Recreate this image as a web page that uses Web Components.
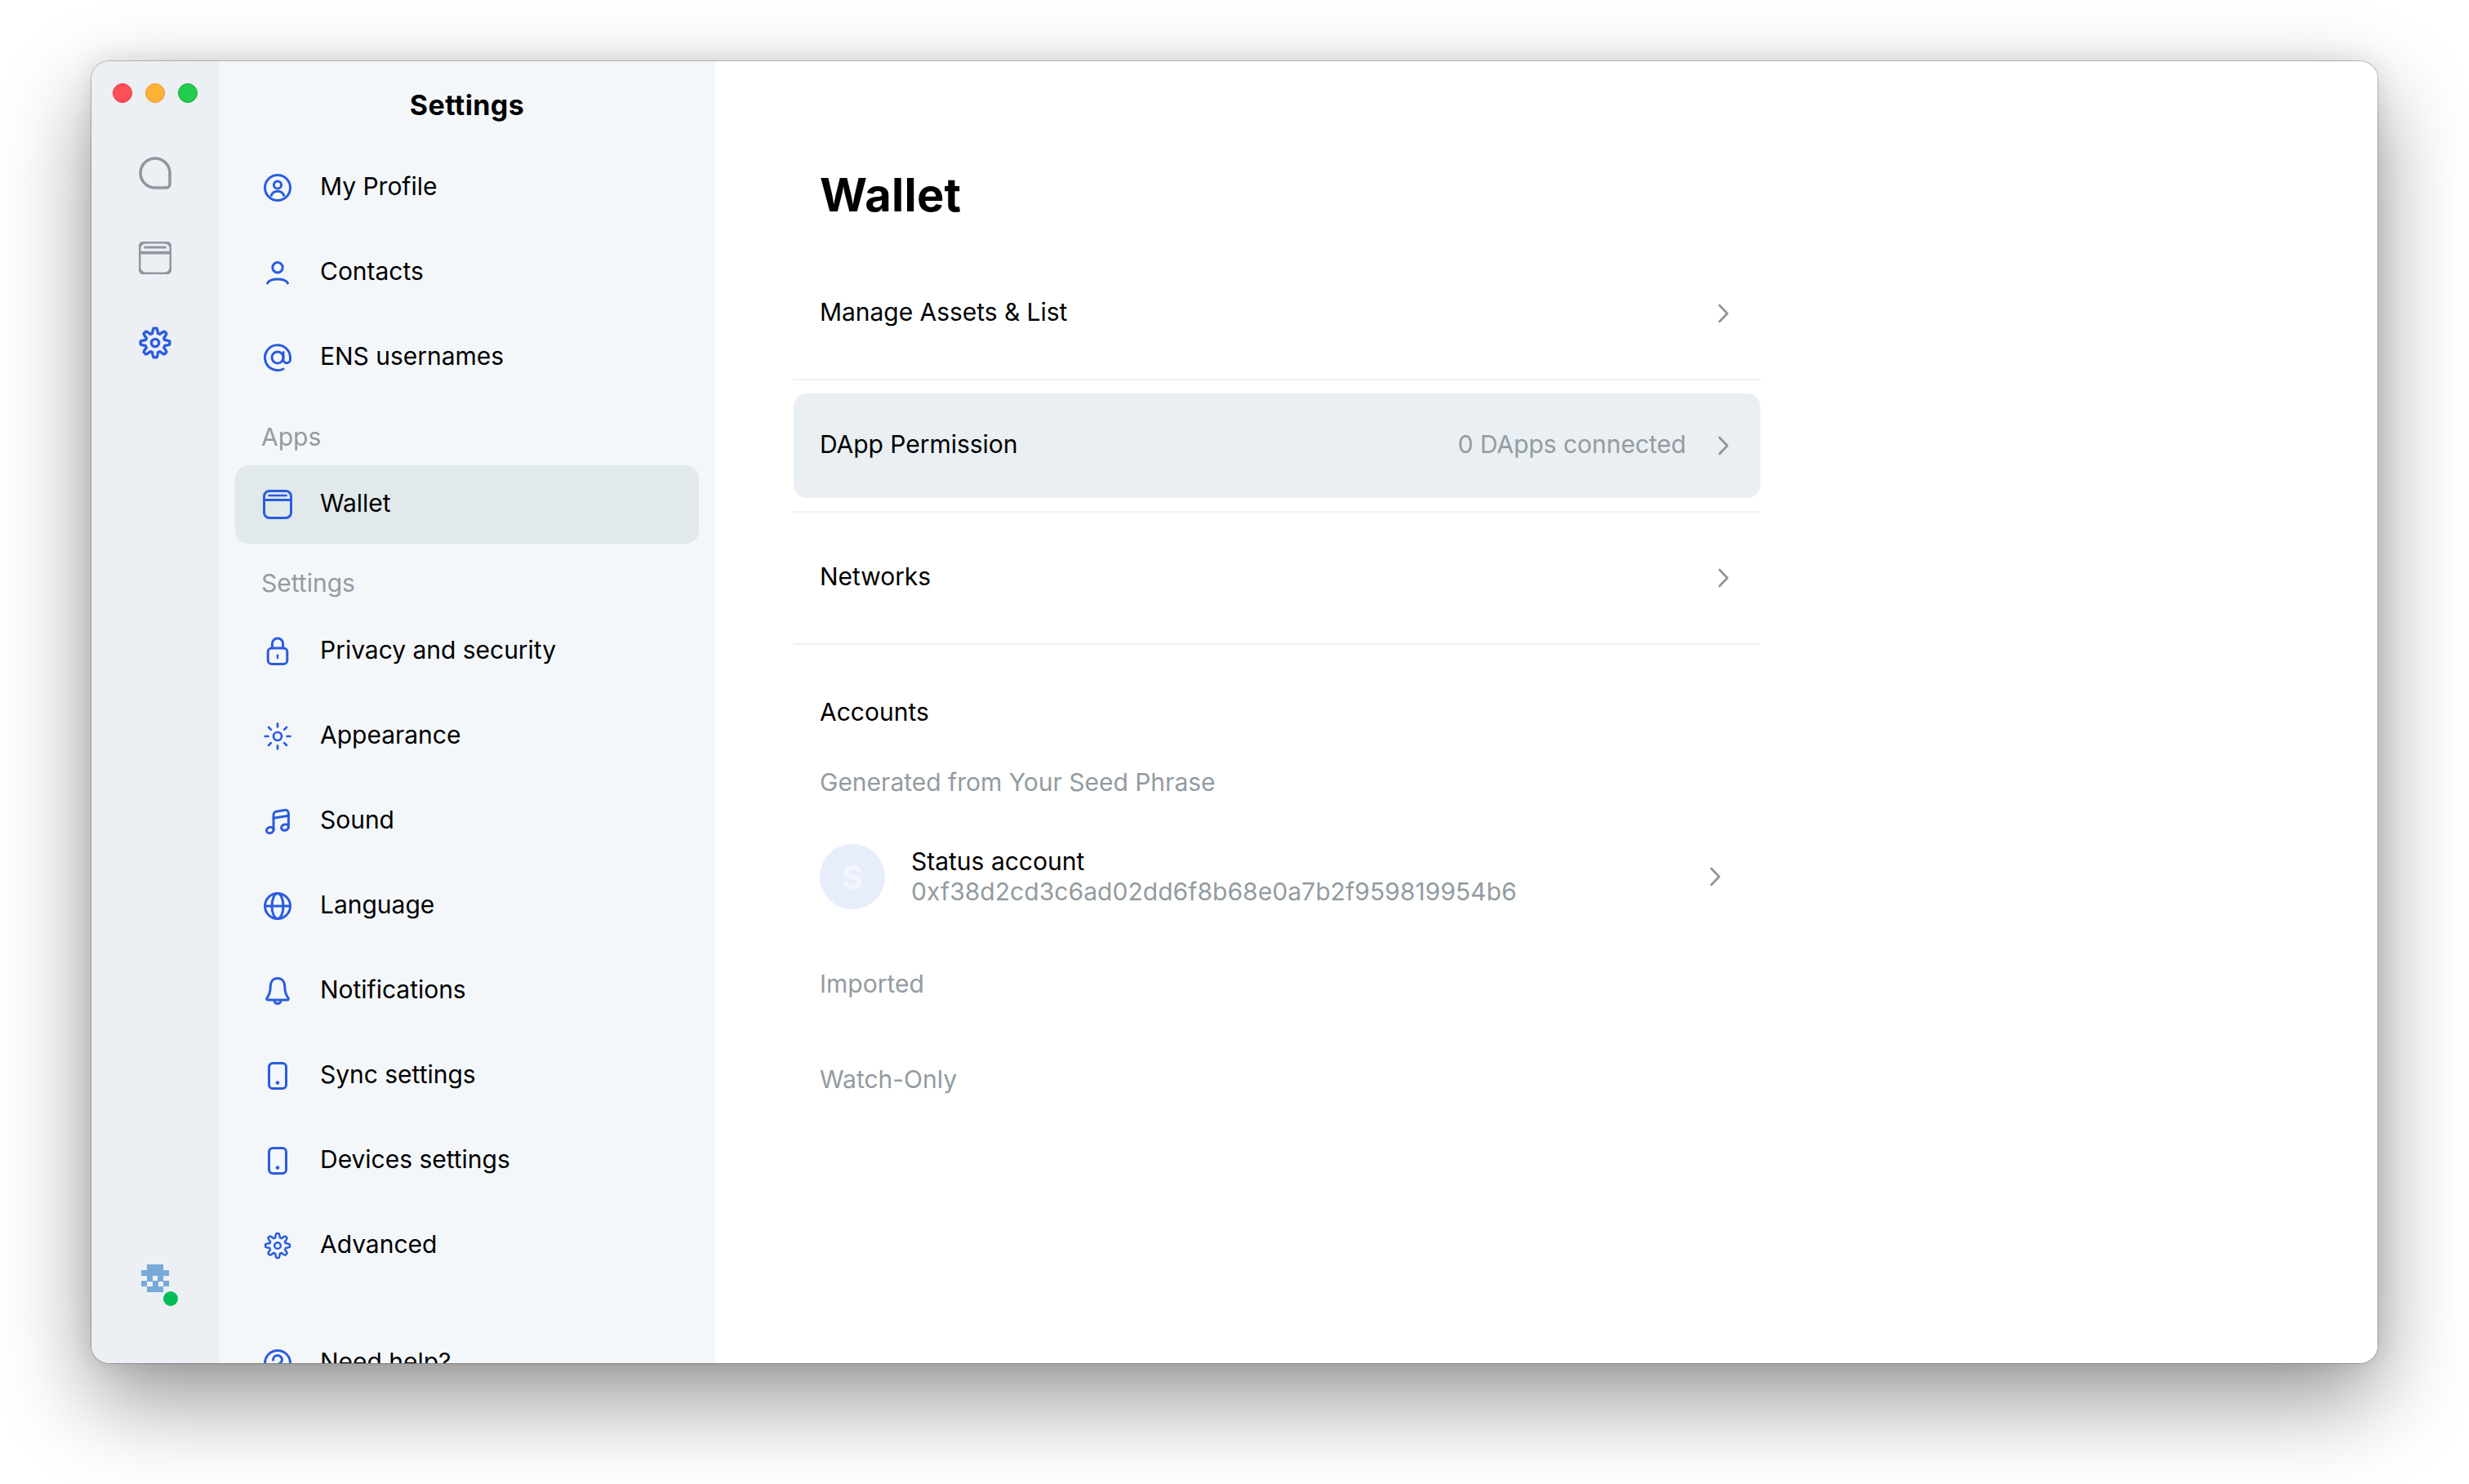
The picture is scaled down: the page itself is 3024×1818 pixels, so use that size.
<!DOCTYPE html>
<html>
<head>
<meta charset="utf-8">
<title>Settings</title>
<style>
  html, body { margin: 0; height: 100%; background: #fff; overflow: hidden; }
  body { padding: 75px 0 0 112px; box-sizing: border-box; font-family: Inter, "Liberation Sans", sans-serif; }
</style>
</head>
<body>
<app-window>
  <nav-rail slot="rail"></nav-rail>
  <settings-sidebar slot="sidebar"></settings-sidebar>
  <wallet-page slot="main"></wallet-page>
</app-window>

<script>
(() => {
  // wavy outline for the cog, sampled so the teeth stay round
  const gearPath = () => {
    let d = '';
    for (let i = 0; i < 240; i++) {
      const a = (i / 240) * Math.PI * 2;
      const r = 15 + 2.9 * Math.max(-1, Math.min(1, 1.5 * Math.cos(8 * a)));
      d += (i ? 'L' : 'M') + (20 + r * Math.sin(a)).toFixed(2) + ' ' + (20 - r * Math.cos(a)).toFixed(2);
    }
    return d + 'Z';
  };

  const sunRays = () => {
    let d = '';
    for (let i = 0; i < 8; i++) {
      const a = i * Math.PI / 4;
      const s = Math.sin(a), c = Math.cos(a);
      d += `M${(20 + 11.5 * s).toFixed(2)} ${(20 - 11.5 * c).toFixed(2)}L${(20 + 15.5 * s).toFixed(2)} ${(20 - 15.5 * c).toFixed(2)}`;
    }
    return d;
  };

  const ICONS = {
    chat: { box: '0 0 40 40', body: '<path d="M20 2A18 18 0 0 1 38 20V33.5A4.5 4.5 0 0 1 33.5 38H20A18 18 0 0 1 20 2Z"/>' },
    wallet: { box: '0 0 40 40', body: `<rect x="3.5" y="3.5" width="33" height="33" rx="6.5"/><path d="M3.5 14.5H36.5"/><path d="M9.5 9H30.5" stroke-width="2.6"/>` },
    profile: { box: '0 0 40 40', body: '<circle cx="20" cy="20" r="15.5"/><circle cx="20" cy="16.5" r="4.6"/><path d="M12.3 29.4C15 22.6 25 22.6 27.7 29.4"/>' },
    contact: { box: '0 0 40 40', body: '<circle cx="20" cy="13.7" r="6.2"/><path d="M7.5 33C11 26.3 29 26.3 32.5 33"/>' },
    at: { box: '0 0 40 40', body: '<circle cx="20" cy="20" r="7"/><path d="M27 13.5V22.5A4.2 4.2 0 0 0 35.5 22.5V20A15.5 15.5 0 1 0 27 34"/>' },
    gear: { box: '0 0 40 40', body: `<path d="${gearPath()}"/><circle cx="20" cy="20" r="4.6"/>` },
    gearSmall: { box: '-4 -4 48 48', body: `<path d="${gearPath()}"/><circle cx="20" cy="20" r="4.6"/>` },
    lock: { box: '0 0 40 40', body: '<rect x="8.2" y="16" width="23.6" height="19.5" rx="4.5"/><path d="M13.4 16V10.5A6.6 6.6 0 0 1 26.6 10.5V16"/><path d="M20 25.5V28.5" stroke-width="2.2"/><circle cx="20" cy="25" r="1.4" fill="currentColor" stroke="none"/>' },
    sun: { box: '0 0 40 40', body: `<circle cx="20" cy="20" r="5"/><path d="${sunRays()}"/>` },
    music: { box: '0 0 40 40', body: '<g transform="translate(0 -1)"><ellipse cx="10.8" cy="32" rx="4.4" ry="3.6" transform="rotate(-18 10.8 32)"/><ellipse cx="29" cy="28.6" rx="4.4" ry="3.6" transform="rotate(-18 29 28.6)"/><path d="M15 31.5V13.5A4.5 4.5 0 0 1 19 9L28.6 7.4A4 4 0 0 1 33.4 11.3V28"/><path d="M15 17.2L33.4 14.2"/></g>' },
    globe: { box: '0 0 40 40', body: '<circle cx="20" cy="20" r="15.5"/><ellipse cx="20" cy="20" rx="7" ry="15.5"/><path d="M4.5 20H35.5"/>' },
    bell: { box: '0 0 40 40', body: '<g transform="translate(0 -1)"><path d="M20 5.5C13.5 5.5 11.2 11 11.2 16C11.2 23 9 27 7 29.6C6.2 30.8 6.8 32 8.2 32H31.8C33.2 32 33.8 30.8 33 29.6C31 27 28.8 23 28.8 16C28.8 11 26.5 5.5 20 5.5Z"/><path d="M16 32.5A4 4 0 0 0 24 32.5"/></g>' },
    phone: { box: '0 0 40 40', body: '<rect x="9.5" y="4.5" width="21" height="31" rx="4.5"/><circle cx="20" cy="28.5" r="2.3" fill="currentColor" stroke="none"/>' },
    help: { box: '0 0 40 40', body: '<circle cx="20" cy="20" r="15.5"/><path d="M14.5 16A5.5 5.5 0 0 1 25.5 16C25.5 20 20 20.5 20 24"/><circle cx="20" cy="29" r="1.8" fill="currentColor" stroke="none"/>' },
    chevron: { box: '0 0 14 24', body: '<path d="M2 2L11.6 12L2 22"/>' }
  };

  class StatusIcon extends HTMLElement {
    connectedCallback() {
      const icon = ICONS[this.getAttribute('name')] || ICONS.chat;
      const w = this.getAttribute('w') || 40;
      const h = this.getAttribute('h') || w;
      const sw = this.getAttribute('stroke') || 3;
      const box = this.getAttribute('box') || icon.box;
      this.attachShadow({ mode: 'open' }).innerHTML = `
        <style>
          :host { display: block; flex: none; width: ${w}px; height: ${h}px; color: var(--icon, #2b5ce0); }
          svg { display: block; width: 100%; height: 100%; fill: none; stroke: currentColor; stroke-width: ${sw}; stroke-linecap: round; stroke-linejoin: round; }
        </style>
        <svg viewBox="${box}">${icon.body}</svg>`;
    }
  }

  class AppWindow extends HTMLElement {
    constructor() {
      super();
      this.attachShadow({ mode: 'open' }).innerHTML = `
        <style>
          :host {
            display: flex; width: 2800px; height: 1595px;
            border-radius: 22px; overflow: hidden; background: #fff;
            box-shadow: 0 0 0 1px rgba(0,0,0,.22), 0 44px 110px 0 rgba(0,0,0,.42), 0 0 30px rgba(0,0,0,.1);
          }
          ::slotted([slot="main"]) { flex: 1; min-width: 0; }
        </style>
        <slot name="rail"></slot>
        <slot name="sidebar"></slot>
        <slot name="main"></slot>`;
    }
  }

  class NavRail extends HTMLElement {
    constructor() {
      super();
      const cells = [[0,1,1,1,0],[1,1,1,1,1],[0,1,0,1,0],[1,0,1,0,1],[0,1,1,1,0]];
      let rects = '';
      cells.forEach((row, y) => row.forEach((on, x) => {
        if (on) rects += `<rect x="${x}" y="${y}" width="1.02" height="1.02"/>`;
      }));
      this.attachShadow({ mode: 'open' }).innerHTML = `
        <style>
          :host {
            display: flex; flex: none; flex-direction: column; box-sizing: border-box;
            width: 156px; height: 100%; background: #ecf0f5;
            padding: 27px 0 0 26px;
          }
          .lights { display: flex; gap: 16px; }
          .lights i { box-sizing: border-box; width: 24px; height: 24px; border-radius: 50%; border: 1.5px solid; }
          .red { background: #ff4f56; border-color: #e8373f !important; }
          .amber { background: #ffb238; border-color: #e6962a !important; }
          .green { background: #22cc4e; border-color: #1cab3c !important; }
          .icons { display: flex; flex-direction: column; gap: 64px; margin: 66px 0 0 32px; --icon: #8f989f; }
          .icons .on { --icon: #2b5ce0; }
          .me { position: relative; margin: auto 0 87px 35px; width: 34px; height: 34px; }
          .me svg { display: block; width: 34px; height: 34px; fill: #78a9d8; shape-rendering: crispEdges; }
          .me b { position: absolute; left: 27px; top: 33px; width: 18px; height: 18px; border-radius: 50%; background: #03bd59; }
        </style>
        <div class="lights"><i class="red"></i><i class="amber"></i><i class="green"></i></div>
        <div class="icons">
          <status-icon name="chat" stroke="3.6"></status-icon>
          <status-icon name="wallet" box="3 3 34 34" stroke="3.2"></status-icon>
          <status-icon class="on" name="gear" stroke="3.4"></status-icon>
        </div>
        <div class="me"><svg viewBox="0 0 5 5">${rects}</svg><b></b></div>`;
    }
  }

  class NavItem extends HTMLElement {
    connectedCallback() {
      const icon = this.getAttribute('icon');
      const big = this.hasAttribute('active');
      this.attachShadow({ mode: 'open' }).innerHTML = `
        <style>
          :host {
            display: flex; flex: none; align-items: center; box-sizing: border-box;
            height: 96px; padding-left: 32px; gap: 32px; border-radius: 16px;
            font-size: 30px; line-height: 40px; color: #000; white-space: nowrap; letter-spacing: -.02px;
            ${big ? 'background: #e2e9eb;' : ''}
          }
          span { position: relative; top: -2px; }
        </style>
        <status-icon name="${icon}" stroke="${icon === 'sun' ? 2.7 : 3}"></status-icon>
        <span><slot></slot></span>`;
    }
  }

  class SectionLabel extends HTMLElement {
    constructor() {
      super();
      this.attachShadow({ mode: 'open' }).innerHTML = `
        <style>
          :host { display: block; font-size: 30px; line-height: 40px; color: #939ba1; white-space: nowrap; }
        </style>
        <slot></slot>`;
    }
  }

  class SettingsSidebar extends HTMLElement {
    constructor() {
      super();
      this.attachShadow({ mode: 'open' }).innerHTML = `
        <style>
          :host {
            display: flex; flex: none; flex-direction: column; box-sizing: border-box;
            width: 608px; height: 100%; overflow: hidden; background: #f4f7fa;
            padding: 0 20px;
          }
          h2 { flex: none; margin: 34px 0 0; height: 40px; line-height: 40px; font-size: 34px; font-weight: 700; text-align: center; color: #000; letter-spacing: .4px; }
          .items { display: flex; flex-direction: column; gap: 8px; margin-top: 33px; }
          section-label { padding-left: 32px; }
          .apps { margin: 21px 0 7px; }
          .set { margin: 20px 0 8px; }
          .help { margin-top: 40px; }
        </style>
        <h2>Settings</h2>
        <div class="items">
          <nav-item icon="profile">My Profile</nav-item>
          <nav-item icon="contact">Contacts</nav-item>
          <nav-item icon="at">ENS usernames</nav-item>
          <section-label class="apps">Apps</section-label>
          <nav-item icon="wallet" active>Wallet</nav-item>
          <section-label class="set">Settings</section-label>
          <nav-item icon="lock">Privacy and security</nav-item>
          <nav-item icon="sun">Appearance</nav-item>
          <nav-item icon="music">Sound</nav-item>
          <nav-item icon="globe">Language</nav-item>
          <nav-item icon="bell">Notifications</nav-item>
          <nav-item icon="phone">Sync settings</nav-item>
          <nav-item icon="phone">Devices settings</nav-item>
          <nav-item icon="gearSmall">Advanced</nav-item>
          <nav-item class="help" icon="help">Need help?</nav-item>
        </div>`;
    }
  }

  class ListRow extends HTMLElement {
    connectedCallback() {
      const hint = this.getAttribute('hint');
      const hover = this.hasAttribute('hover');
      this.attachShadow({ mode: 'open' }).innerHTML = `
        <style>
          :host { display: block; border-bottom: 2px solid #eef2f5; padding-bottom: 16px; margin-bottom: 16px; }
          .row {
            display: flex; align-items: center; height: 128px; box-sizing: border-box;
            padding: 0 38px 0 32px; border-radius: 16px;
            font-size: 30px; line-height: 40px; color: #000; letter-spacing: -.04px;
            ${hover ? 'background: #eaeff3;' : ''}
          }
          .name { flex: 1; position: relative; top: -2px; }
          .hint { color: #939ba1; margin-right: 39px; position: relative; top: -2px; }
          status-icon { --icon: #8b949b; }
        </style>
        <div class="row">
          <span class="name"><slot></slot></span>
          ${hint ? `<span class="hint">${hint}</span>` : ''}
          <status-icon name="chevron" w="14" h="24" stroke="2.6"></status-icon>
        </div>`;
    }
  }

  class AccountRow extends HTMLElement {
    connectedCallback() {
      this.attachShadow({ mode: 'open' }).innerHTML = `
        <style>
          :host { display: flex; align-items: center; height: 80px; padding: 0 48px 0 32px; font-size: 30px; line-height: 37px; }
          .avatar {
            flex: none; display: flex; align-items: center; justify-content: center;
            width: 80px; height: 80px; border-radius: 50%;
            background: #e8edfb; color: #f3f6fd; font-size: 40px; font-weight: 700;
          }
          .text { flex: 1; margin-left: 32px; }
          .name { color: #000; }
          .addr { color: #939ba1; letter-spacing: .05px; }
          status-icon { --icon: #8b949b; }
        </style>
        <div class="avatar">${this.getAttribute('initial')}</div>
        <div class="text">
          <div class="name">${this.getAttribute('name')}</div>
          <div class="addr">${this.getAttribute('address')}</div>
        </div>
        <status-icon name="chevron" w="14" h="24" stroke="2.6"></status-icon>`;
    }
  }

  class WalletPage extends HTMLElement {
    constructor() {
      super();
      this.attachShadow({ mode: 'open' }).innerHTML = `
        <style>
          :host { display: block; box-sizing: border-box; height: 100%; background: #fff; padding: 126px 0 0 96px; }
          .col { width: 1184px; }
          h1 { margin: 0 0 43px 32px; font-size: 56px; line-height: 76px; font-weight: 700; color: #000; letter-spacing: .3px; }
          .sub { padding-left: 32px; font-size: 30px; line-height: 40px; color: #000; }
          section-label { padding-left: 32px; }
          .accounts { margin-top: 62px; }
          .seed { margin: 46px 0 56px; }
          .imported { margin-top: 71px; }
          .watch { margin-top: 77px; }
        </style>
        <div class="col">
          <h1>Wallet</h1>
          <list-row>Manage Assets &amp; List</list-row>
          <list-row hover hint="0 DApps connected">DApp Permission</list-row>
          <list-row>Networks</list-row>
          <div class="sub accounts">Accounts</div>
          <section-label class="seed">Generated from Your Seed Phrase</section-label>
          <account-row initial="S" name="Status account" address="0xf38d2cd3c6ad02dd6f8b68e0a7b2f959819954b6"></account-row>
          <section-label class="imported">Imported</section-label>
          <section-label class="watch">Watch-Only</section-label>
        </div>`;
    }
  }

  customElements.define('status-icon', StatusIcon);
  customElements.define('section-label', SectionLabel);
  customElements.define('nav-item', NavItem);
  customElements.define('list-row', ListRow);
  customElements.define('account-row', AccountRow);
  customElements.define('nav-rail', NavRail);
  customElements.define('settings-sidebar', SettingsSidebar);
  customElements.define('wallet-page', WalletPage);
  customElements.define('app-window', AppWindow);
})();
</script>
</body>
</html>
